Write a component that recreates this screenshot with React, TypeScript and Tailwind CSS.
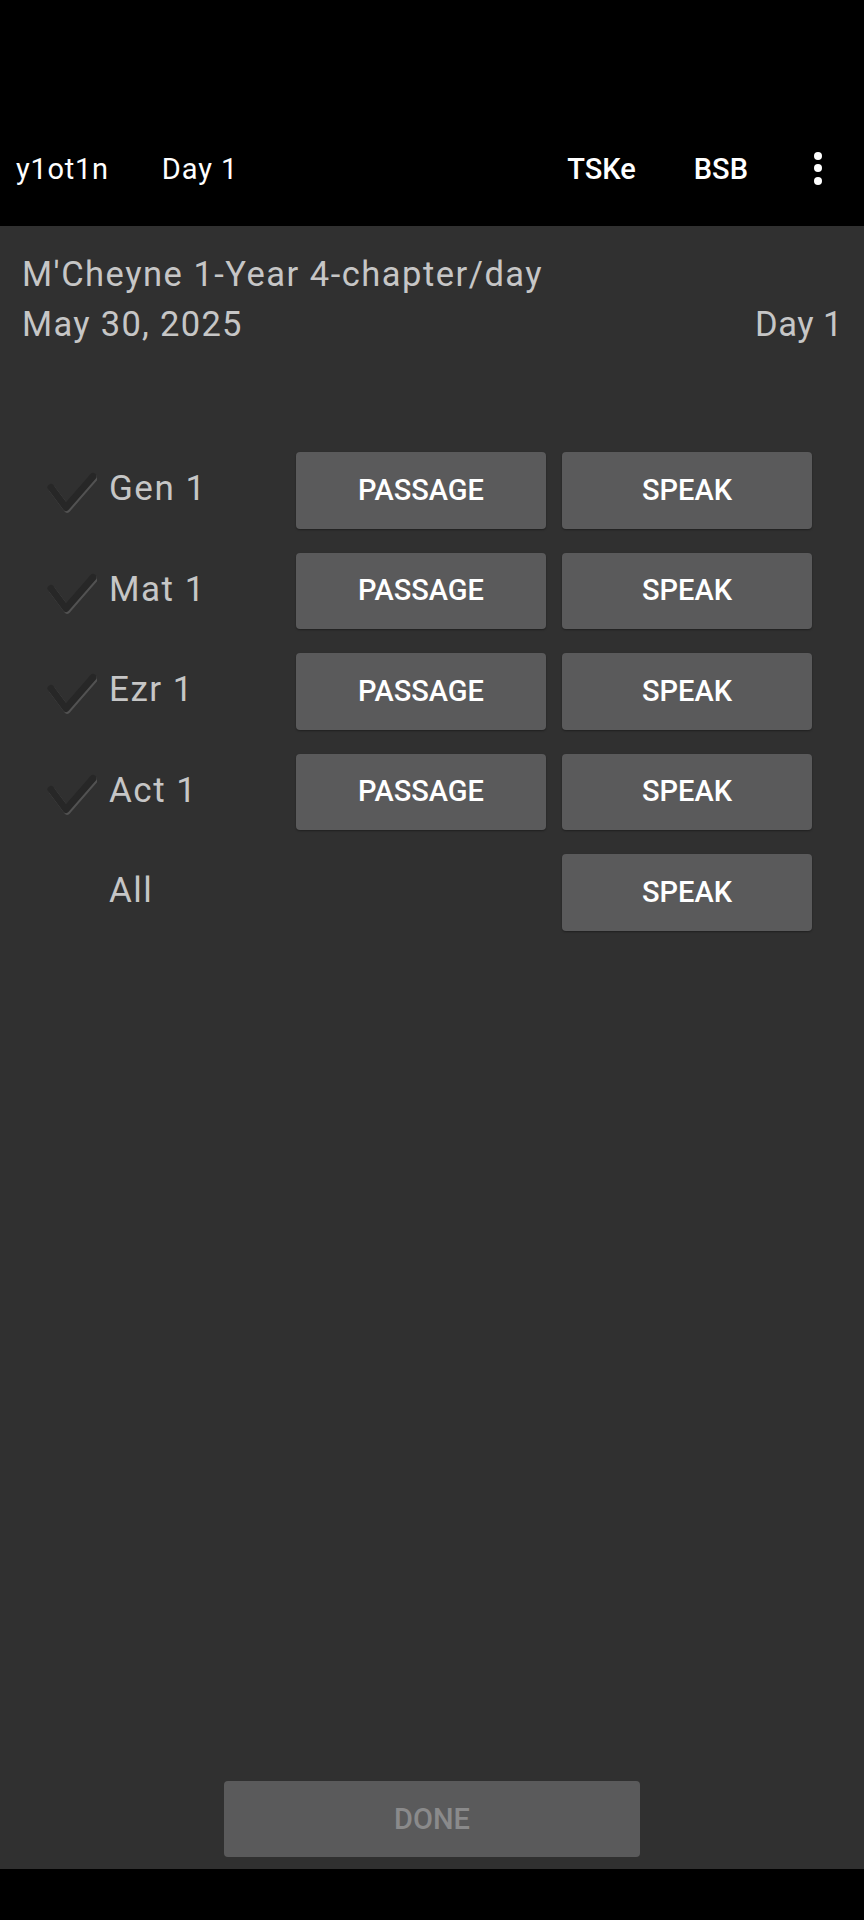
import React from "react";

const font = { fontFamily: "Roboto, 'Noto Sans', sans-serif" };

function Check() {
  return (
    <svg width="50" height="44" viewBox="0 0 50 44" className="shrink-0">
      <polyline
        points="5.2,19.2 20.2,39.2 47.2,8.2"
        fill="none"
        stroke="#525252"
        strokeWidth="7"
        strokeLinecap="round"
        strokeLinejoin="round"
      />
      <polyline
        points="4,17.5 19,37.5 46,6.5"
        fill="none"
        stroke="#272727"
        strokeWidth="7"
        strokeLinecap="round"
        strokeLinejoin="round"
      />
    </svg>
  );
}

function Btn({ label }: { label: string }) {
  return (
    <button className="w-[250px] h-[76.6px] rounded-[4px] bg-[#5a5a5b] text-white text-[29px] font-medium flex items-center justify-center shadow-[0_1px_2px_rgba(0,0,0,0.35)]">
      {label}
    </button>
  );
}

function Row({ label, passage, check }: { label: string; passage: boolean; check: boolean }) {
  return (
    <div className="flex items-center h-[76.6px]">
      <div className="w-[109px] pl-[47px] pt-[4px] flex items-center">{check && <Check />}</div>
      <div className="w-[187px] text-[35px] tracking-[1.5px] text-[#c6c6c6] -mt-[2px]">{label}</div>
      {passage ? <Btn label="PASSAGE" /> : <div className="w-[250px]" />}
      <div className="w-[16px]" />
      <Btn label="SPEAK" />
    </div>
  );
}

export default function App() {
  const rows = [
    { label: "Gen 1", passage: true, check: true },
    { label: "Mat 1", passage: true, check: true },
    { label: "Ezr 1", passage: true, check: true },
    { label: "Act 1", passage: true, check: true },
    { label: "All", passage: false, check: false },
  ];
  return (
    <div className="w-[864px] h-[1920px] flex flex-col bg-black" style={font}>
      <div className="h-[226px] bg-black pt-[113px] shrink-0">
        <div className="h-[113px] flex items-center text-[29px] text-white">
          <span className="ml-[16px] tracking-[0.75px]">y1ot1n</span>
          <span className="ml-[53px] tracking-[0.9px]">Day 1</span>
          <span className="ml-auto font-medium">TSKe</span>
          <span className="ml-[58px] font-medium">BSB</span>
          <div className="ml-[66px] mr-[42px] flex flex-col gap-[4.5px] -mt-[3px]">
            <div className="w-[8px] h-[8px] rounded-full bg-white" />
            <div className="w-[8px] h-[8px] rounded-full bg-white" />
            <div className="w-[8px] h-[8px] rounded-full bg-white" />
          </div>
        </div>
      </div>
      <div className="flex-1 bg-[#303030] flex flex-col">
        <div className="pt-[24px] pl-[22px] pr-[21px] text-[34.5px] leading-[49.5px] text-[#c6c6c6]">
          <div className="tracking-[1.5px]">M'Cheyne 1-Year 4-chapter/day</div>
          <div className="flex justify-between">
            <span className="tracking-[1.3px]">May 30, 2025</span>
            <span className="tracking-[0.5px]">Day 1</span>
          </div>
        </div>
        <div className="mt-[103px] flex flex-col gap-[24px]">
          {rows.map((r) => (
            <Row key={r.label} {...r} />
          ))}
        </div>
        <div className="mt-auto mb-[12px] flex justify-center">
          <button className="w-[416px] h-[76px] rounded-[4px] bg-[#5a5a5b] text-[#8a8a8b] text-[29px] font-medium pt-[2px]">
            DONE
          </button>
        </div>
      </div>
      <div className="h-[51px] bg-black shrink-0" />
    </div>
  );
}
